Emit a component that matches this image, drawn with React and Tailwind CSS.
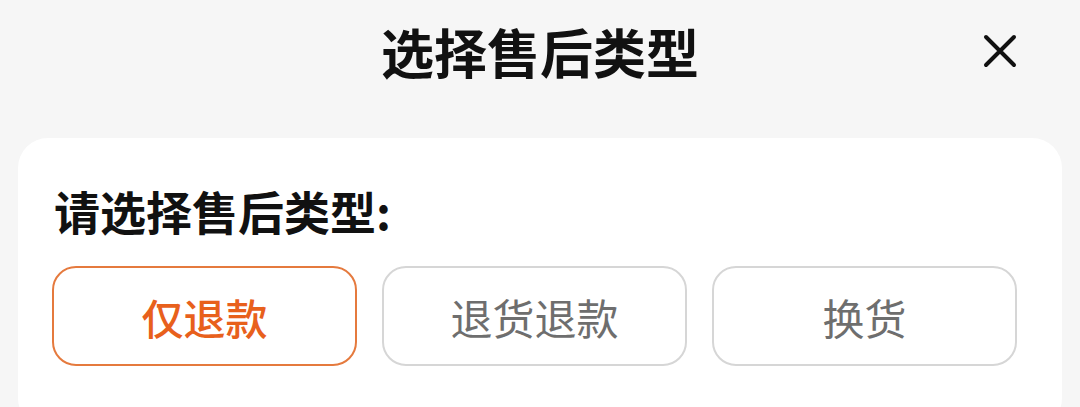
import { useState } from 'react';

const TYPES = ['仅退款', '退货退款', '换货'];

export default function App() {
  const [selected, setSelected] = useState(0);

  return (
    <div
      className="h-[407px] w-[1080px] overflow-hidden bg-[#f6f6f6]"
      style={{ fontFamily: '"Noto Sans CJK SC", "Noto Sans", sans-serif' }}
    >
      {/* header */}
      <div className="relative flex h-[102px] items-center justify-center">
        <h1 className="text-[53px] font-bold leading-none text-[#111]">选择售后类型</h1>
        <button className="absolute right-[63px] top-[34px] flex h-[34px] w-[34px] items-center justify-center">
          <svg viewBox="0 0 34 34" width="34" height="34" fill="none" stroke="#111" strokeWidth="4" strokeLinecap="round">
            <path d="M3 3 L31 31 M31 3 L3 31" />
          </svg>
        </button>
      </div>

      {/* card */}
      <div className="mx-[18px] mt-[36px] h-[290px] rounded-[30px] bg-white pl-[34px] pr-[45px] pt-[49px]">
        <div className="pl-[2px] text-[46px] font-bold leading-none text-[#111]">请选择售后类型:</div>
        <div className="mt-[33px] grid grid-cols-3 gap-[25px]">
          {TYPES.map((t, i) => {
            const on = i === selected;
            return (
              <button
                key={t}
                onClick={() => setSelected(i)}
                className={
                  on
                    ? 'flex h-[100px] items-center justify-center rounded-[24px] border-2 border-[#e57a3e] text-[42px] font-medium text-[#e8601c]'
                    : 'flex h-[100px] items-center justify-center rounded-[24px] border-2 border-[#d6d6d6] text-[42px] font-normal text-[#6e6e6e]'
                }
              >
                {t}
              </button>
            );
          })}
        </div>
      </div>
    </div>
  );
}
